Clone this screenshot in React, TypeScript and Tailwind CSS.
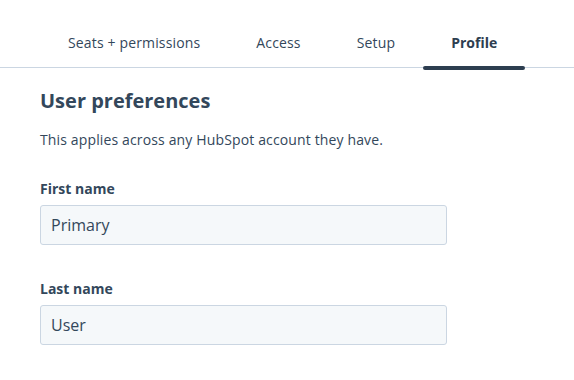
import React from "react";

const tabs = ["Seats + permissions", "Access", "Setup", "Profile"];

export default function App() {
  return (
    <div
      className="w-[574px] h-[380px] bg-white text-[#33475b] overflow-hidden"
      style={{ fontFamily: '"Open Sans", "Liberation Sans", sans-serif' }}
    >
      <div className="pt-[33px] border-b border-[#cbd6e2]">
        <div className="flex pl-[40px]">
          {tabs.map((t) => {
            const active = t === "Profile";
            return (
              <div
                key={t}
                className={`relative px-[28px] h-[34px] text-[14px] leading-[20px] ${
                  active ? "font-bold text-[#2d3e50]" : "text-[#33475b] tracking-[0.15px]"
                }`}
              >
                {t}
                {active && (
                  <div className="absolute left-0 right-0 bottom-[-3px] h-[4px] rounded-full bg-[#2d3e50]" />
                )}
              </div>
            );
          })}
        </div>
      </div>
      <div className="pl-[40px] pt-[19px]">
        <h2 className="text-[20px] leading-[28px] font-bold text-[#33475b]">User preferences</h2>
        <p className="mt-[15px] text-[14px] leading-[20px] tracking-[0.14px]">
          This applies across any HubSpot account they have.
        </p>
        <div className="mt-[29px] flex flex-col">
          <label className="text-[14px] leading-[20px] font-bold">First name</label>
          <div className="mt-[6px] w-[407px] h-[40px] bg-[#f5f8fa] border border-[#cbd6e2] rounded-[3px] flex items-center px-[10px] text-[16px]">
            Primary
          </div>
          <label className="mt-[34px] text-[14px] leading-[20px] font-bold">Last name</label>
          <div className="mt-[6px] w-[407px] h-[40px] bg-[#f5f8fa] border border-[#cbd6e2] rounded-[3px] flex items-center px-[10px] text-[16px]">
            User
          </div>
        </div>
      </div>
    </div>
  );
}
